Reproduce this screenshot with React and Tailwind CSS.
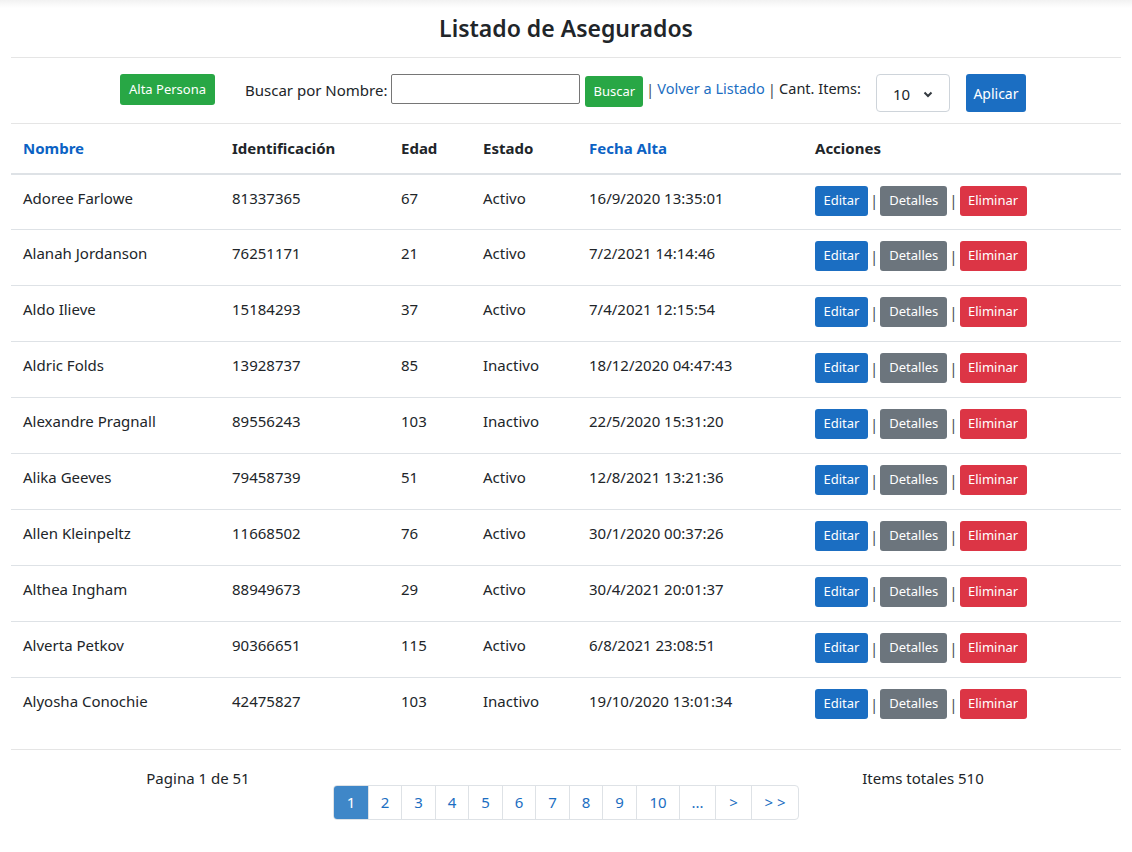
import React from 'react';

const rows = [
  ['Adoree Farlowe', '81337365', '67', 'Activo', '16/9/2020 13:35:01'],
  ['Alanah Jordanson', '76251171', '21', 'Activo', '7/2/2021 14:14:46'],
  ['Aldo Ilieve', '15184293', '37', 'Activo', '7/4/2021 12:15:54'],
  ['Aldric Folds', '13928737', '85', 'Inactivo', '18/12/2020 04:47:43'],
  ['Alexandre Pragnall', '89556243', '103', 'Inactivo', '22/5/2020 15:31:20'],
  ['Alika Geeves', '79458739', '51', 'Activo', '12/8/2021 13:21:36'],
  ['Allen Kleinpeltz', '11668502', '76', 'Activo', '30/1/2020 00:37:26'],
  ['Althea Ingham', '88949673', '29', 'Activo', '30/4/2021 20:01:37'],
  ['Alverta Petkov', '90366651', '115', 'Activo', '6/8/2021 23:08:51'],
  ['Alyosha Conochie', '42475827', '103', 'Inactivo', '19/10/2020 13:01:34'],
];

const pages = [
  { label: '1', w: 'w-[34px]', active: true },
  { label: '2', w: 'w-[33px]' },
  { label: '3', w: 'w-[34px]' },
  { label: '4', w: 'w-[33px]' },
  { label: '5', w: 'w-[34px]' },
  { label: '6', w: 'w-[33px]' },
  { label: '7', w: 'w-[34px]' },
  { label: '8', w: 'w-[33px]' },
  { label: '9', w: 'w-[34px]' },
  { label: '10', w: 'w-[43px]' },
  { label: '...', w: 'w-[36px]' },
  { label: '>', w: 'w-[36px]' },
  { label: '> >', w: 'w-[47px]' },
];

const Sep = ({ wide }) => (
  <span className={`text-[#495057] text-[15px] ${wide ? 'mx-[3px]' : 'mx-[2px]'}`}>|</span>
);

export default function App() {
  return (
    <div className="min-h-[852px] bg-white text-[#212529] text-[15px]" style={{ fontFamily: '"Noto Sans", "Open Sans", sans-serif' }}>
      <div className="h-[8px] bg-gradient-to-b from-[#f2f2f2] to-white" />
      <div className="mx-[11px]">
        <h1 className="text-center text-[23px] font-semibold leading-[30px] pt-[5px] pb-[14px]">Listado de Asegurados</h1>
        <div className="border-t border-[#e5e5e5]" />

        <div className="h-[65px] flex items-start pt-[16px] text-[#212529]">
          <button className="ml-[109px] h-[31px] px-[9px] bg-[#28a745] text-white text-[13px] rounded-[3px]">Alta Persona</button>
          <span className="ml-[30px] mt-[5px] text-[15px]">Buscar por Nombre:</span>
          <input className="ml-[4px] w-[189px] h-[30px] border border-[#767676] rounded-[2px]" />
          <button className="ml-[5px] mt-[2px] h-[31px] px-[8px] bg-[#28a745] text-white text-[13px] rounded-[3px]">Buscar</button>
          <div className="mt-[4px] flex items-center text-[14.5px]">
            <Sep wide />
            <span className="text-[#1b6ec2]">Volver a Listado</span>
            <Sep wide />
            <span>Cant. Items:</span>
          </div>
          <div className="ml-[15px] w-[74px] h-[38px] border border-[#ced4da] rounded-[4px] flex items-center justify-between px-[16px] pt-[3px]">
            <span className="text-[15px]">10</span>
            <svg width="10" height="8" viewBox="0 0 10 8" className="mt-[-2px]">
              <path d="M1.5 2.5 L5 6 L8.5 2.5" fill="none" stroke="#343a40" strokeWidth="2" />
            </svg>
          </div>
          <button className="ml-[16px] h-[38px] w-[60px] bg-[#1b6ec2] text-white text-[14px] rounded-[3px] pt-[1px]">Aplicar</button>
        </div>

        <table className="w-full border-collapse border-t border-[#e5e5e5]">
          <thead>
            <tr className="h-[50px] border-b-2 border-[#dee2e6] font-bold text-left">
              <th className="w-[209px] pl-[12px] text-[#0b62c4] font-bold">Nombre</th>
              <th className="w-[169px] pl-[12px] font-bold">Identificación</th>
              <th className="w-[82px] pl-[12px] font-bold">Edad</th>
              <th className="w-[106px] pl-[12px] font-bold">Estado</th>
              <th className="w-[226px] pl-[12px] text-[#0b62c4] font-bold">Fecha Alta</th>
              <th className="pl-[12px] font-bold">Acciones</th>
            </tr>
          </thead>
          <tbody>
            {rows.map((r, i) => (
              <tr key={i} className={`h-[56px] ${i < rows.length - 1 ? 'border-b border-[#dee2e6]' : ''}`}>
                <td className="pl-[12px] align-top pt-[12px]">{r[0]}</td>
                <td className="pl-[12px] align-top pt-[12px]">{r[1]}</td>
                <td className="pl-[12px] align-top pt-[12px]">{r[2]}</td>
                <td className="pl-[12px] align-top pt-[12px]">{r[3]}</td>
                <td className="pl-[12px] align-top pt-[12px]">{r[4]}</td>
                <td className="pl-[12px] align-top pt-[11px]">
                  <div className="flex items-center text-[13px]">
                    <span className="h-[30px] w-[53px] flex items-center justify-center bg-[#1b6ec2] text-white rounded-[3px]">Editar</span>
                    <Sep />
                    <span className="h-[30px] w-[67px] flex items-center justify-center bg-[#6c757d] text-white rounded-[3px]">Detalles</span>
                    <Sep />
                    <span className="h-[30px] w-[67px] flex items-center justify-center bg-[#dc3545] text-white rounded-[3px]">Eliminar</span>
                  </div>
                </td>
              </tr>
            ))}
          </tbody>
        </table>

        <div className="mt-[15px] border-t border-[#e5e5e5]" />

        <div className="grid grid-cols-3 pt-[17px]">
          <div className="text-center text-[15px] pl-[4px]">Pagina 1 de 51</div>
          <div className="flex justify-center pt-[18px]">
            <div className="flex shrink-0 border border-[#dee2e6] rounded-[4px] overflow-hidden">
              {pages.map((p, i) => (
                <span
                  key={i}
                  className={`${p.w} shrink-0 h-[33px] flex items-center justify-center text-[15px] ${i > 0 ? 'border-l border-[#dee2e6]' : ''} ${p.active ? 'bg-[#3f87c8] text-white' : 'text-[#1b6ec2]'}`}
                >
                  {p.label}
                </span>
              ))}
            </div>
          </div>
          <div className="text-center text-[15px] pr-[26px]">Items totales 510</div>
        </div>
      </div>
    </div>
  );
}
